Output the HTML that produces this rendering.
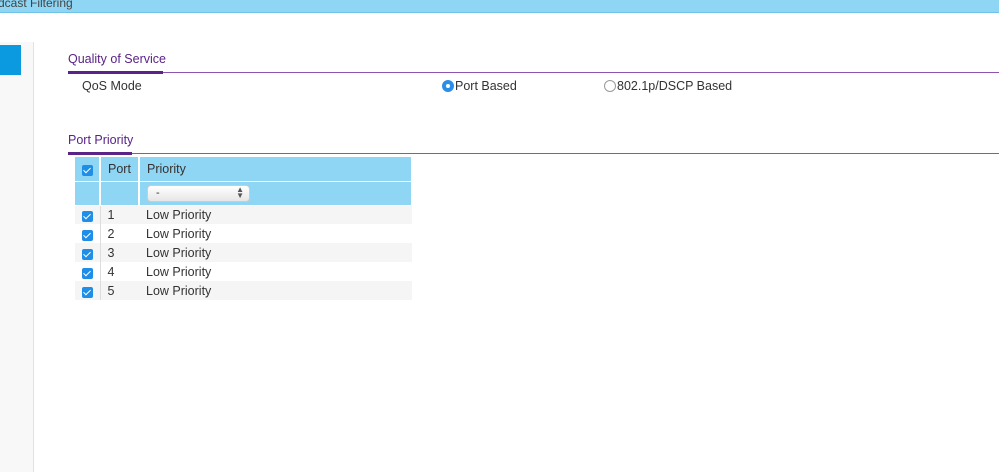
<!DOCTYPE html>
<html><head><style>
*{margin:0;padding:0;box-sizing:border-box}
body{width:999px;height:468px;background:#fff;font-family:"Liberation Sans",Arial,sans-serif;font-size:12.5px;color:#333;position:relative;overflow:hidden}
.top{position:absolute;left:0;top:0;width:999px;height:13px;background:#8fd5f4;border-bottom:1px solid #6fc3ea}
.top span{position:absolute;left:-2px;top:-4px;font-size:12px;color:#444}
.side{position:absolute;left:0;top:42px;width:34px;height:430px;background:#f8f8f8;border-right:1px solid #e2e2e2}
.sideb{position:absolute;left:0;top:45px;width:21px;height:30px;background:#0b9ae0}
.title{position:absolute;left:68px;color:#5b2287;font-size:12.5px}
.ul{position:absolute;left:68px;width:931px;height:1px;background:#8e55b0}
.ul b{position:absolute;left:0;top:-1px;height:3px;background:#5b2287}
.cb{display:inline-block;width:11px;height:11px;border-radius:2px;background:#1f8ee8;position:relative;vertical-align:middle;margin-top:2px}
.cb:after{content:"";position:absolute;left:3px;top:1px;width:3px;height:6px;border:solid #fff;border-width:0 1.5px 1.5px 0;transform:rotate(45deg)}
table{position:absolute;left:75px;top:157px;width:338px;border-collapse:collapse}
td{height:19px;padding:0;font-size:12.5px;color:#333}
tr.h td{background:#8fd5f4;height:24px;border-right:2px solid #fff;border-bottom:1px solid #fff}
tr.g td{background:#f5f5f5}
td.c{width:25px;text-align:center}
td.p{width:39px;padding-left:7px;border-left:1px solid #ddd}
tr.h td.p{border-left:none}
td.r{padding-left:7px}
.sel{width:103px;height:17px;border:1px solid #ccc;border-radius:4px;background:linear-gradient(#fff,#e6e6e6);position:relative;font-size:11px;padding-left:8px;line-height:15px}
.sel i{position:absolute;right:5px;top:1px;font-style:normal;font-size:8px;line-height:6px;color:#555}
.rad{position:absolute;width:12px;height:12px;border-radius:50%}
</style></head><body>
<div class="top"><span>dcast Filtering</span></div>
<div class="side"></div><div class="sideb"></div>
<div class="title" style="top:52px">Quality of Service</div>
<div class="ul" style="top:72px"><b style="width:95px"></b></div>
<div style="position:absolute;left:82px;top:79px">QoS Mode</div>
<div class="rad" style="left:442px;top:80px;background:#2a8de8"><div style="position:absolute;left:4px;top:4px;width:4px;height:4px;border-radius:50%;background:#fff"></div></div>
<div style="position:absolute;left:455px;top:79px">Port Based</div>
<div class="rad" style="left:604px;top:80px;border:1px solid #999;background:#fff"></div>
<div style="position:absolute;left:617px;top:79px">802.1p/DSCP Based</div>
<div class="title" style="top:133px">Port Priority</div>
<div class="ul" style="top:153px"><b style="width:64px"></b></div>
<table>
<tr class="h"><td class="c"><span class="cb"></span></td><td class="p">Port</td><td class="r">Priority</td></tr>
<tr class="h"><td class="c"></td><td class="p"></td><td class="r"><div class="sel">-<i>▲<br>▼</i></div></td></tr>
<tr class="g"><td class="c"><span class="cb"></span></td><td class="p">1</td><td class="r">Low Priority</td></tr>
<tr><td class="c"><span class="cb"></span></td><td class="p">2</td><td class="r">Low Priority</td></tr>
<tr class="g"><td class="c"><span class="cb"></span></td><td class="p">3</td><td class="r">Low Priority</td></tr>
<tr><td class="c"><span class="cb"></span></td><td class="p">4</td><td class="r">Low Priority</td></tr>
<tr class="g"><td class="c"><span class="cb"></span></td><td class="p">5</td><td class="r">Low Priority</td></tr>
</table>
</body></html>
